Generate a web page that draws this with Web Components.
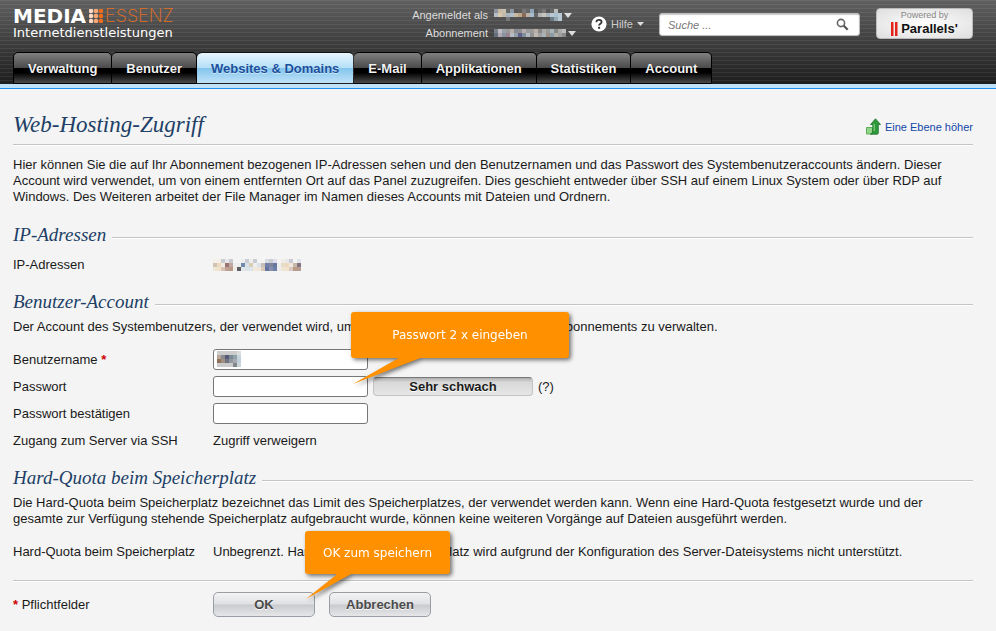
<!DOCTYPE html>
<html lang="de">
<head>
<meta charset="utf-8">
<title>Web-Hosting-Zugriff</title>
<style>
body { margin: 0; background: #f4f4f4; color: #1a1a1a; font: 13px/16px "Liberation Sans", Arial, sans-serif; }
</style>
</head>
<body>
<hosting-page></hosting-page>

<script>
const define = (name, html, setup) => {
  const template = document.createElement('template');
  template.innerHTML = html;
  customElements.define(name, class extends HTMLElement {
    constructor() {
      super();
      this.attachShadow({ mode: 'open' }).append(template.content.cloneNode(true));
    }
    connectedCallback() {
      if (setup) setup(this, this.shadowRoot);
    }
  });
};

/* Grid of 4px squares that hides a private value; rows are separated by "/", cells by blanks. */
define('pixel-mask', `
<style>
  :host { display: inline-block; line-height: 0; }
  svg { display: block; }
</style>
<svg aria-hidden="true" shape-rendering="crispEdges"></svg>`, (host, root) => {
  const rows = host.getAttribute('cells').split('/').map(r => r.trim().split(/\s+/));
  const svg = root.querySelector('svg');
  svg.setAttribute('width', rows[0].length * 4);
  svg.setAttribute('height', rows.length * 4);
  svg.innerHTML = rows.map((r, y) => r.map((c, x) =>
    c === '-' ? '' : `<rect x="${x * 4}" y="${y * 4}" width="4" height="4" fill="#${c}"/>`).join('')).join('');
});

define('brand-logo', `
<style>
  :host { display: block; color: #fff; }
  .name { display: flex; align-items: center; height: 18px; line-height: 18px; }
  b { font: bold 20px/18px "DejaVu Sans", sans-serif; }
  svg { margin: 0 2px 0 3px; }
  i { font: 200 18px/18px Inter, sans-serif; color: #e4701e; }
  .sub { font: 13px/16px "DejaVu Sans", sans-serif; }
</style>
<div class="name"><b>MEDIA</b><svg width="14" height="14" viewBox="0 0 14 14" aria-hidden="true"></svg><i>ESSENZ</i></div>
<div class="sub">Internetdienstleistungen</div>`, (host, root) => {
  const shades = ['#fbd9c2', '#f6a877', '#ee6c1c'];
  let dots = '';
  for (let y = 0; y < 3; y++) for (let x = 0; x < 3; x++)
    dots += `<circle cx="${2 + x * 5}" cy="${2 + y * 5}" r="2.3" fill="${shades[x]}"/>`;
  root.querySelector('svg').innerHTML = dots;
});

define('session-info', `
<style>
  :host { display: grid; grid-template-columns: auto auto; column-gap: 6px; row-gap: 2px; justify-items: start; font-size: 11px; line-height: 16px; color: #ddd; }
  .key { justify-self: end; }
  .val { display: flex; align-items: center; gap: 2px; height: 16px; }
  svg { display: block; }
</style>
<span class="key">Angemeldet als</span>
<span class="val"><pixel-mask cells="8d93a0 c9b9a0 c8bfae 666 8a97a3 555 5a5a5a 777 666 8ea5bb 555 666 777 555 666 bbb 555 / b5bdc6 d8c8ae c0b8a8 a9b3bf b0bdcb c9b8a0 bba58b 8c6b59 b9b1a8 a9bccb 666 b3b3b3 c9c4bd a8b5bd b9c8d3 a8c0d0 b9c9d3 / - - - 777 - - - - - - - - - - 6a7a86 96a8b0 b7cbd6"></pixel-mask>
<svg width="8" height="5" viewBox="0 0 8 5" aria-hidden="true"><path d="M0 0h8L4 5z" fill="#ddd"/></svg></span>
<span class="key">Abonnement</span>
<span class="val"><pixel-mask cells="777f8b c0bcc3 9aa0a8 999 b8aca8 8a8a94 8f8f8f b5acac 999 9b9b9b b8b0a8 888 aaa 999 aab4b8 888 aaa bbb / 66717d b0a8b3 8b93a0 9b8490 b5bcc6 96a0aa 60608e 80909a b5b9c0 929292 c0b8b0 a0a0a0 a8b4b8 9a8f86 8b9ca6 b0b0a5 a0a0a0 8a8a8a"></pixel-mask>
<svg width="8" height="5" viewBox="0 0 8 5" aria-hidden="true"><path d="M0 0h8L4 5z" fill="#ddd"/></svg></span>`);

define('help-menu', `
<style>
  :host { display: block; }
  button { display: flex; align-items: center; gap: 4px; padding: 0; border: 0; background: none; color: #ccc; font: 11px/16px "Liberation Sans", Arial, sans-serif; }
  svg { display: block; }
</style>
<button type="button"><svg width="16" height="16" viewBox="0 0 16 16" aria-hidden="true"><circle cx="8" cy="8" r="7.6" fill="#fff"/><path d="M5.4 6.2C5.4 4.6 6.5 3.8 8 3.8s2.6.9 2.6 2.2c0 1.7-2.5 1.8-2.5 3.6" fill="none" stroke="#333" stroke-width="1.8"/><rect x="7.1" y="10.8" width="2" height="2" fill="#333"/></svg><span>Hilfe</span><svg width="7" height="4" viewBox="0 0 7 4" aria-hidden="true"><path d="M0 0h7L3.500 4z" fill="#ddd"/></svg></button>`);

define('search-box', `
<style>
  :host { display: flex; align-items: center; box-sizing: border-box; width: 201px; height: 23px; padding: 0 10px 0 8px; background: #fff; border: 1px solid #bbb; border-radius: 3px; box-shadow: inset 0 1px 1px #ccc; }
  input { flex: 1; min-width: 0; padding: 0; border: 0; outline: 0; background: none; font: italic 11px/16px "Liberation Sans", Arial, sans-serif; }
  input::placeholder { color: #777; }
  button { display: block; padding: 0; border: 0; background: none; }
  svg { display: block; }
</style>
<input type="search" aria-label="Suche" placeholder="Suche ...">
<button type="button" aria-label="Suchen"><svg width="13" height="13" viewBox="0 0 13 13"><circle cx="5" cy="5" r="3.6" fill="none" stroke="#666" stroke-width="1.6"/><path d="M7.700 7.700l4 4" stroke="#555" stroke-width="2.200"/></svg></button>`);

define('powered-badge', `
<style>
  :host { display: block; box-sizing: border-box; width: 97px; height: 31px; border: 1px solid #bbb; border-radius: 4px; background: radial-gradient(ellipse, #fff, #dedede); text-align: center; color: #888; font: 9px/12px "Liberation Sans", Arial, sans-serif; }
  .brand { display: flex; align-items: center; justify-content: center; gap: 3px; color: #111; font: bold 13px/15px "Liberation Sans", Arial, sans-serif; }
</style>
<div>Powered by</div>
<div class="brand"><svg width="7" height="14" aria-hidden="true"><path d="M0 0h2.500v14H0zM4 0h2.500v14H4z" fill="#e5231b"/></svg><span>Parallels'</span></div>`);

define('nav-tab', `
<style>
  :host { display: block; }
  a { display: block; box-sizing: border-box; height: 32px; padding: 0 14px; border: 1px solid #000; border-left-width: 0; border-radius: 5px 5px 0 0; background: linear-gradient(#808080, #4a4a4a 50%, #000 51%, #000 65%, #4a4a4a); color: #f2f2f2; font: bold 13px/32px "Liberation Sans", Arial, sans-serif; text-decoration: none; text-shadow: 0 1px 1px #000; white-space: nowrap; }
  :host(:first-child) a { border-left-width: 1px; }
  :host([active]) a { border-color: transparent; border-top-color: #111; background: linear-gradient(#e8f5fd, #b4dff6 50%, #84c5ee 51%, #bfe2f8); background-clip: padding-box; color: #1b4f9c; text-shadow: 0 1px 0 #cdeafb; }
</style>
<a href="#"><slot></slot></a>`);

define('app-header', `
<style>
  :host { display: flex; flex-direction: column; padding: 0 23px 0 13px; border-bottom: 1px solid #1e90f0;
    background: linear-gradient(#bfe2f8, #bfe2f8) bottom / 100% 4px no-repeat, repeating-linear-gradient(rgba(255,255,255,.07) 0 1px, transparent 1px 4px), linear-gradient(#606060, #1d1d1d 84px); }
  .top { display: flex; height: 52px; align-items: flex-start; }
  brand-logo { flex: 1; margin-top: 7px; }
  session-info { margin: 7px 15px 0 0; }
  help-menu { margin: 16px 15px 0 0; }
  search-box { margin: 13px 16px 0 0; }
  powered-badge { margin-top: 8px; }
  nav { display: flex; padding-bottom: 4px; }
</style>
<div class="top"><brand-logo></brand-logo><session-info></session-info><help-menu></help-menu><search-box></search-box><powered-badge></powered-badge></div>
<nav><slot></slot></nav>`);

define('page-title', `
<style>
  :host { display: flex; align-items: center; justify-content: space-between; height: 35px; border-bottom: 1px solid #c4c4c4; box-shadow: 0 1px #fff; }
  h1 { margin: 0; padding-bottom: 4px; font: italic 23px/28px "Liberation Serif", "Times New Roman", serif; color: #213f66; }
  a { display: flex; align-items: center; gap: 4px; color: #1347a8; font-size: 11px; line-height: 16px; text-decoration: none; }
</style>
<h1><slot></slot></h1>
<a href="#"><svg width="15" height="17" viewBox="0 0 15 17" aria-hidden="true"><path d="M.5 9.500h6v6.500h-6z" fill="#8fd68a" stroke="#5fae5a"/><path d="M9.500.8L14.500 6.500h-2.200v8.500q0 1.200-1.300 1.200H4.500l2.300-2V6.500H4.500z" fill="#2f9a3c" stroke="#1d6e2a" stroke-width=".8"/><path d="M8.200 6v7" stroke="#7fd07c" stroke-width="1.200"/></svg><span>Eine Ebene höher</span></a>`);

define('form-section', `
<style>
  :host { display: block; }
  .head { display: flex; align-items: center; gap: 6px; }
  .head::after { content: ""; flex: 1; height: 1px; margin-top: 4px; background: #c4c4c4; box-shadow: 0 1px #fff; }
  h2 { margin: 0; font: italic 19px/24px "Liberation Serif", "Times New Roman", serif; color: #213f66; }
</style>
<div class="head"><h2></h2></div>
<slot></slot>`, (host, root) => { root.querySelector('h2').textContent = host.getAttribute('heading'); });

define('field-row', `
<style>
  :host { display: grid; grid-template-columns: 200px 1fr; align-items: center; min-height: 27px; position: relative; }
  .value { display: flex; align-items: center; gap: 5px; }
</style>
<span class="label"></span><div class="value"><slot></slot></div><slot name="note"></slot>`,
(host, root) => { root.querySelector('.label').textContent = host.getAttribute('label'); });

define('text-field', `
<style>
  :host { display: grid; grid-template-columns: 200px 1fr; align-items: center; height: 27px; position: relative; }
  .value { display: flex; align-items: center; gap: 5px; }
  .box { position: relative; display: flex; }
  input { box-sizing: border-box; width: 155px; height: 21px; padding: 0 4px; border: 1px solid #777; border-radius: 3px; background: #fff; font: inherit; }
  ::slotted([slot="mask"]) { position: absolute; left: 4px; top: 2px; }
  .req { color: #c00; }
</style>
<label for="f"><span class="text"></span></label>
<div class="value"><span class="box"><input id="f"><slot name="mask"></slot></span><slot></slot></div><slot name="note"></slot>`,
(host, root) => {
  root.querySelector('.text').textContent = host.getAttribute('label');
  root.querySelector('input').type = host.getAttribute('type') || 'text';
  if (host.hasAttribute('required')) root.querySelector('label').insertAdjacentHTML('beforeend', ' <b class="req">*</b>');
});

define('strength-meter', `
<style>
  :host { display: block; box-sizing: border-box; width: 160px; height: 19px; border: 1px solid #c4c4c4; border-top-color: #777; border-radius: 4px; background: linear-gradient(#b0b0b0, #d8d8d8 25%, #e6e6e6); font-weight: bold; line-height: 18px; text-align: center; text-shadow: 0 1px #fff; color: #1a1a1a; }
</style>
<slot></slot>`);

define('push-button', `
<style>
  :host { display: block; }
  button { display: block; width: 102px; height: 25px; padding: 0; border: 1px solid #999ea5; border-radius: 5px; background: linear-gradient(#f4f4f5, #dfe0e2 48%, #c9cbce 52%, #e6e6e8); color: #4a4a4a; font: bold 13px/22px "Liberation Sans", Arial, sans-serif; text-shadow: 0 1px #fff; }
</style>
<button type="button"><slot></slot></button>`);

/* Orange bubble whose tail hangs from its lower edge. */
define('call-out', `
<style>
  :host { position: absolute; z-index: 1; filter: drop-shadow(2px 2px 2px rgba(0,0,0,.55)); color: #fff; }
  .bubble { display: flex; align-items: center; justify-content: center; box-sizing: border-box; height: 100%; border-radius: 3px; background: #ff9000; font: 12px/16px "DejaVu Sans", sans-serif; }
  svg { position: absolute; left: 0; top: 100%; margin-top: -1px; }
</style>
<div class="bubble"><slot></slot></div>
<svg width="80" height="28" aria-hidden="true"><path fill="#ff9000"/></svg>`,
(host, root) => { root.querySelector('path').setAttribute('d', host.getAttribute('tail')); });

define('hosting-page', `
<style>
  :host { display: block; }
  main { padding: 20px 23px 12px 13px; }
  p { margin: 0; }
  .intro { margin: 12px 0 18px; }
  .ip field-row { margin-top: 4px; }
  .account { margin-top: 12px; }
  .account p { margin: 5px 0 11px; }
  .quota { margin-top: 12px; }
  .quota p { margin: 5px 0 11px; }
  .note-pass { left: 338px; bottom: 42px; width: 218px; height: 46px; }
  .note-ok { left: 292px; bottom: -9px; width: 145px; height: 43px; }
  .actions { display: grid; grid-template-columns: 200px 1fr; align-items: center; margin-top: 15px; padding-top: 11px; border-top: 1px solid #c4c4c4; box-shadow: inset 0 1px #fff; }
  .buttons { display: flex; gap: 14px; }
  .star { color: #c00; }
</style>
<app-header>
  <nav-tab>Verwaltung</nav-tab><nav-tab>Benutzer</nav-tab><nav-tab active>Websites &amp; Domains</nav-tab><nav-tab>E-Mail</nav-tab><nav-tab>Applikationen</nav-tab><nav-tab>Statistiken</nav-tab><nav-tab>Account</nav-tab>
</app-header>
<main>
  <page-title>Web-Hosting-Zugriff</page-title>
  <p class="intro">Hier können Sie die auf Ihr Abonnement bezogenen IP-Adressen sehen und den Benutzernamen und das Passwort des Systembenutzeraccounts ändern. Dieser Account wird verwendet, um von einem entfernten Ort auf das Panel zuzugreifen. Dies geschieht entweder über SSH auf einem Linux System oder über RDP auf Windows. Des Weiteren arbeitet der File Manager im Namen dieses Accounts mit Dateien und Ordnern.</p>
  <form-section class="ip" heading="IP-Adressen">
    <field-row label="IP-Adressen"><pixel-mask cells="f6f0e8 f6efe8 c9cacf e8e8ec c9cacf - - eee c9ccd2 eee c9ccd2 - - d8dce2 c9ccd2 dde - f0ece6 e8e8ea c9cacf - e0e4ea / cfc4b4 ecd9be f2ece2 9a7474 c0a8a0 eee eee 6f8aaa d8e0e8 d8ccb4 eee dde2e8 c8c0b8 7080a8 8088a0 6878a0 f0f0f0 e8dcc8 ecd9be f0e8dc c8b8a8 847480 / f0e6d6 f0e2cc d8c4b4 c0a094 b89888 f0ece6 5c5c62 e0e6ea d8e4ea dce6ea f2e8d8 f0e8da d8c8b8 6474a0 8890b0 6c80a8 eee f0e6d6 f0e2cc d8c8c0 b89c88 b49c90"></pixel-mask></field-row>
  </form-section>
  <form-section class="account" heading="Benutzer-Account">
    <p>Der Account des Systembenutzers, der verwendet wird, um Dateien und Ordner innerhalb des Abonnements zu verwalten.</p>
    <text-field label="Benutzername" required><pixel-mask slot="mask" cells="ccc ccc ccc ccc ccc ddd / b8a898 8a8a90 5a5a78 7a8a96 90a4a8 c8d4dc / 907058 a09080 707480 9098a0 a8a8b0 c0d0dc / ccc ccc ccc ccc 808888 ccd4d8"></pixel-mask></text-field>
    <text-field label="Passwort" type="password"><strength-meter>Sehr schwach</strength-meter><span>(?)</span><call-out slot="note" class="note-pass" tail="M48 0H72L2 27L46 2z">Passwort 2 x eingeben</call-out></text-field>
    <text-field label="Passwort bestätigen" type="password"></text-field>
    <field-row label="Zugang zum Server via SSH">Zugriff verweigern</field-row>
  </form-section>
  <form-section class="quota" heading="Hard-Quota beim Speicherplatz">
    <p>Die Hard-Quota beim Speicherplatz bezeichnet das Limit des Speicherplatzes, der verwendet werden kann. Wenn eine Hard-Quota festgesetzt wurde und der gesamte zur Verfügung stehende Speicherplatz aufgebraucht wurde, können keine weiteren Vorgänge auf Dateien ausgeführt werden.</p>
    <field-row label="Hard-Quota beim Speicherplatz">Unbegrenzt. Hard-Quota beim Speicherplatz wird aufgrund der Konfiguration des Server-Dateisystems nicht unterstützt.<call-out slot="note" class="note-ok" tail="M32 0H48L1 26L31 2z">OK zum speichern</call-out></field-row>
  </form-section>
  <div class="actions"><span><b class="star">*</b> Pflichtfelder</span><div class="buttons"><push-button>OK</push-button><push-button>Abbrechen</push-button></div></div>
</main>`);
</script>
</body>
</html>
